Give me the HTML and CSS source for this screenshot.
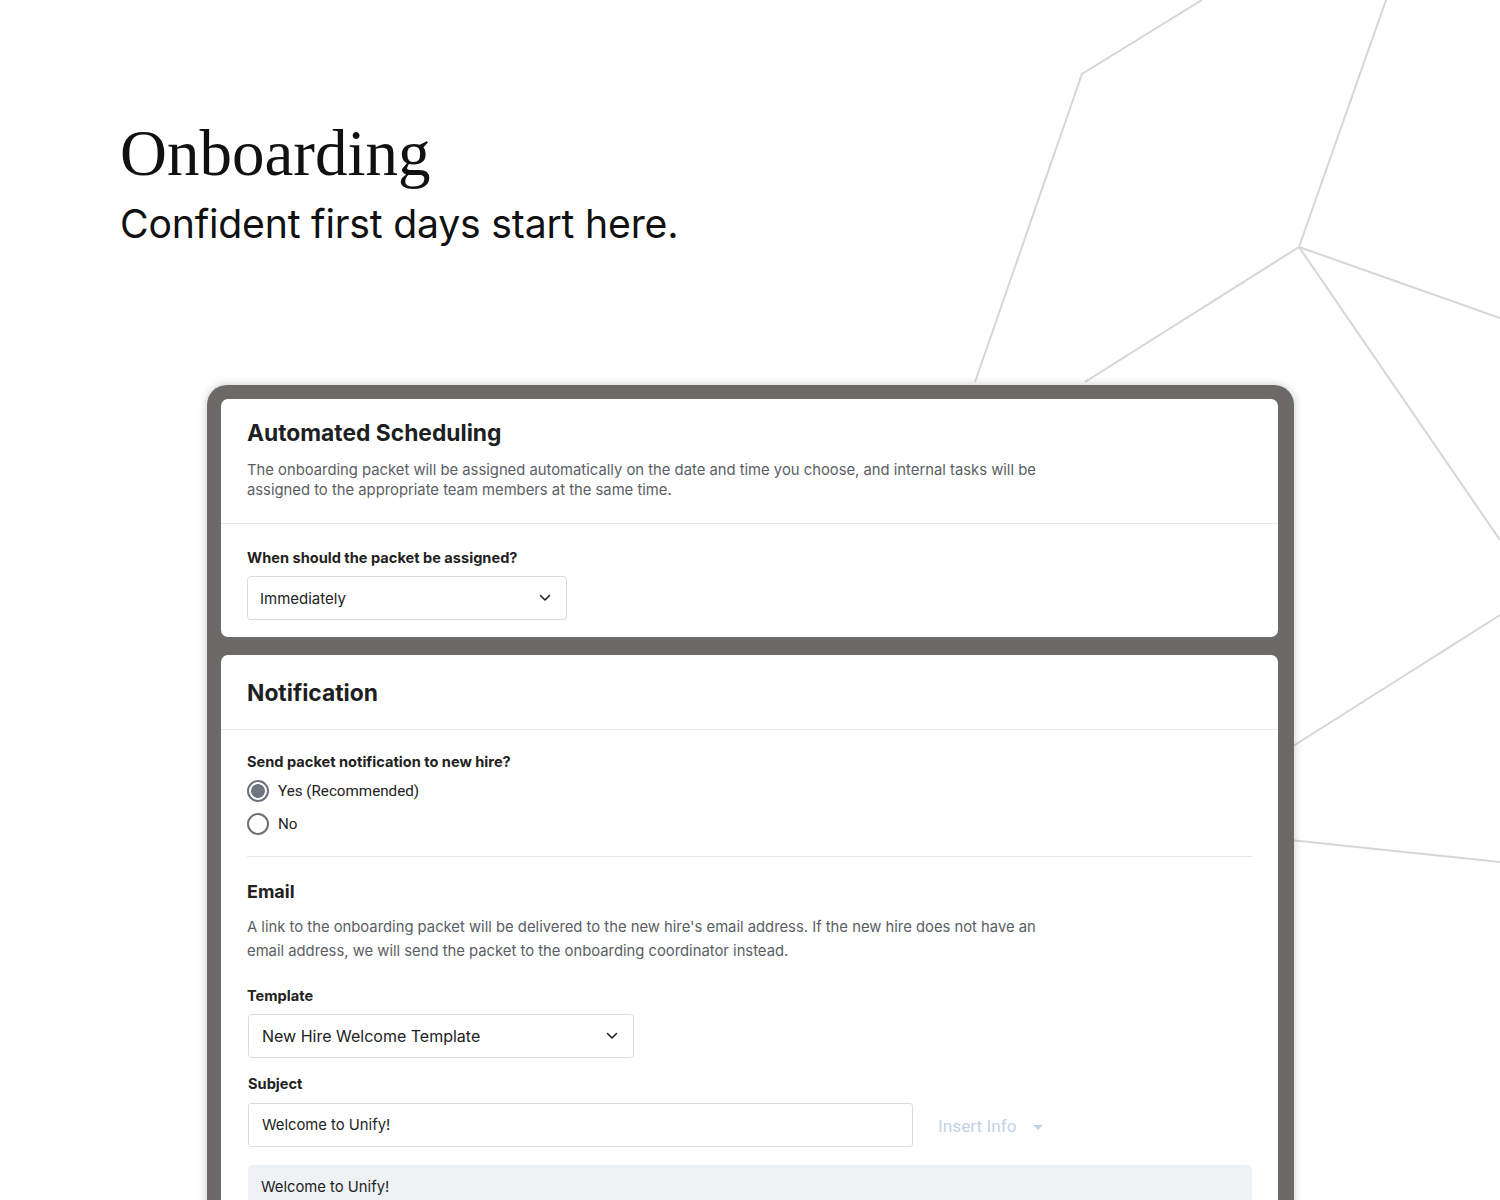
FILE: index.html
```html
<!DOCTYPE html>
<html>
<head>
<meta charset="utf-8">
<link rel="stylesheet" href="styles.css">
</head>
<body>
<div class="page">
  <svg class="bg" width="1500" height="1200" viewBox="0 0 1500 1200" fill="none" stroke="#d6d6d6" stroke-width="2">
    <polyline points="1202,0 1082,74 975,382"/>
    <polyline points="1386,0 1299,247"/>
    <polyline points="1299,247 1500,318"/>
    <polyline points="1299,247 1085,382"/>
    <polyline points="1299,247 1500,540"/>
    <polyline points="1500,615 1290,748"/>
    <polyline points="1290,840 1500,862"/>
  </svg>
  <header class="hero">
    <h1 class="title">Onboarding</h1>
    <p class="subtitle">Confident first days start here.</p>
  </header>
  <div class="frame">
    <section class="card">
      <div class="card-head">
        <h2 class="card-title">Automated Scheduling</h2>
        <p class="desc">The onboarding packet will be assigned automatically on the date and time you choose, and internal tasks will be assigned to the appropriate team members at the same time.</p>
      </div>
      <div class="card-body">
        <div class="label">When should the packet be assigned?</div>
        <div class="select select-sm">
          <span>Immediately</span>
          <svg class="chev" width="12" height="8" viewBox="0 0 12 8"><path d="M1.5 1.5 6 6l4.5-4.5" fill="none" stroke="#222" stroke-width="1.6" stroke-linecap="round" stroke-linejoin="round"/></svg>
        </div>
      </div>
    </section>
    <section class="card card2">
      <div class="card-head head2">
        <h2 class="card-title">Notification</h2>
      </div>
      <div class="card-body body2">
        <div class="label">Send packet notification to new hire?</div>
        <div class="radios">
          <div class="radio-row"><span class="radio checked"></span><span>Yes (Recommended)</span></div>
          <div class="radio-row"><span class="radio"></span><span>No</span></div>
        </div>
        <hr class="divider">
        <h3 class="sub-title">Email</h3>
        <p class="desc desc2">A link to the onboarding packet will be delivered to the new hire's email address. If the new hire does not have an email address, we will send the packet to the onboarding coordinator instead.</p>
        <div class="label label-t">Template</div>
        <div class="select select-lg">
          <span>New Hire Welcome Template</span>
          <svg class="chev" width="12" height="8" viewBox="0 0 12 8"><path d="M1.5 1.5 6 6l4.5-4.5" fill="none" stroke="#222" stroke-width="1.6" stroke-linecap="round" stroke-linejoin="round"/></svg>
        </div>
        <div class="label label-s">Subject</div>
        <div class="subject-row">
          <div class="input">Welcome to Unify!</div>
          <div class="insert">Insert Info <span class="caret"></span></div>
        </div>
        <div class="body-box">Welcome to Unify!</div>
      </div>
    </section>
  </div>
</div>
</body>
</html>
```
FILE: styles.css
```css
* { box-sizing: border-box; }
html, body { margin: 0; padding: 0; background: #fff; }
.page {
  position: relative;
  width: 1500px;
  height: 1200px;
  overflow: hidden;
}
.bg { position: absolute; left: 0; top: 0; z-index: 0; }
.hero {
  position: relative;
  z-index: 1;
  padding: 121px 0 0 120px;
}
.title {
  margin: 0;
  font-family: "Liberation Serif", serif;
  font-weight: 400;
  font-size: 65px;
  line-height: 65px;
  color: #111;
}
.subtitle {
  margin: 15px 0 0 0;
  font-family: "Inter", sans-serif;
  font-weight: 400;
  font-size: 39.2px;
  line-height: 46px;
  color: #111;
  letter-spacing: -0.2px;
}
.frame {
  position: relative;
  z-index: 2;
  margin: 138px 0 0 207px;
  width: 1087px;
  height: 900px;
  background: #6b6a68;
  border-radius: 20px 20px 0 0;
  padding: 14px 16px 0 14px;
  box-shadow: 0 0 10px rgba(0,0,0,0.22);
  display: flex;
  flex-direction: column;
  gap: 18px;
  font-family: "Inter", sans-serif;
  color: #222;
}
.card {
  background: #fff;
  border-radius: 7px;
}
.card2 { flex: 1; border-radius: 7px 7px 0 0; }
.card-head {
  padding: 20px 26px 23px 26px;
  border-bottom: 1px solid #e6e8eb;
}
.card-title {
  margin: 0;
  font-size: 22.8px;
  font-weight: 700;
  line-height: 28px;
  color: #1d1f22;
}
.desc {
  margin: 13px 0 0 0;
  font-size: 14.8px;
  line-height: 20px;
  color: #5a5e64;
  max-width: 812px;
}
.card-body { padding: 24px 26px 17px 26px; }
.label {
  font-size: 14.6px;
  font-weight: 700;
  line-height: 20px;
  color: #222;
}
.select {
  margin-top: 8px;
  height: 44px;
  border: 1px solid #d8dde3;
  border-radius: 4px;
  display: flex;
  align-items: center;
  justify-content: space-between;
  padding: 0 15px 0 12px;
  font-size: 15px;
  color: #222;
}
.select-sm { width: 320px; }
.head2 { padding: 24px 26px 22px 26px; }
.body2 { padding-top: 22px; }
.radios { margin-top: 8px; display: flex; flex-direction: column; gap: 11px; }
.radio-row { display: flex; align-items: center; gap: 9px; font-family: "Roboto", sans-serif; font-size: 15.2px; line-height: 22px; color: #222; }
.radio {
  width: 22px; height: 22px;
  border-radius: 50%;
  border: 2px solid #6b7078;
  display: inline-block;
  background: #fff;
}
.radio.checked {
  border-color: #6b7280;
  background: radial-gradient(circle, #6f7581 0 6.5px, #fff 7.3px);
}
.divider { border: 0; border-top: 1px solid #e6e8eb; margin: 21px 0 0 0; }
.sub-title {
  margin: 24px 0 0 0;
  font-size: 18px;
  font-weight: 700;
  line-height: 22px;
  color: #222;
}
.desc2 { margin-top: 12px; line-height: 24px; font-size: 14.8px; max-width: 812px; }
.label-t { margin-top: 23px; margin-left: 0; }
.select-lg { width: 386px; height: 44px; font-size: 16px; margin-left: 1px; padding-left: 13px; }
.label-s { margin-top: 16px; margin-left: 1px; }
.subject-row { display: flex; align-items: center; margin-top: 9px; margin-left: 1px; }
.input {
  width: 665px;
  height: 44px;
  border: 1px solid #d8dde3;
  border-radius: 3px;
  display: flex;
  align-items: center;
  padding-left: 13px;
  font-size: 14.8px;
  color: #222;
}
.insert {
  margin-left: 25px;
  margin-top: 2px;
  font-family: "Roboto", sans-serif;
  font-size: 17.3px;
  color: #c4d2e6;
  display: flex;
  align-items: center;
  gap: 16px;
}
.caret {
  width: 0; height: 0;
  border-left: 5px solid transparent;
  border-right: 5px solid transparent;
  border-top: 5px solid #c4d2e6;
  margin-top: 2px;
}
.body-box {
  margin: 18px 0 0 1px;
  background: #eff2f5;
  border-radius: 5px 5px 0 0;
  height: 60px;
  padding: 13px 13px;
  font-size: 14.8px;
  color: #222;
}
```
